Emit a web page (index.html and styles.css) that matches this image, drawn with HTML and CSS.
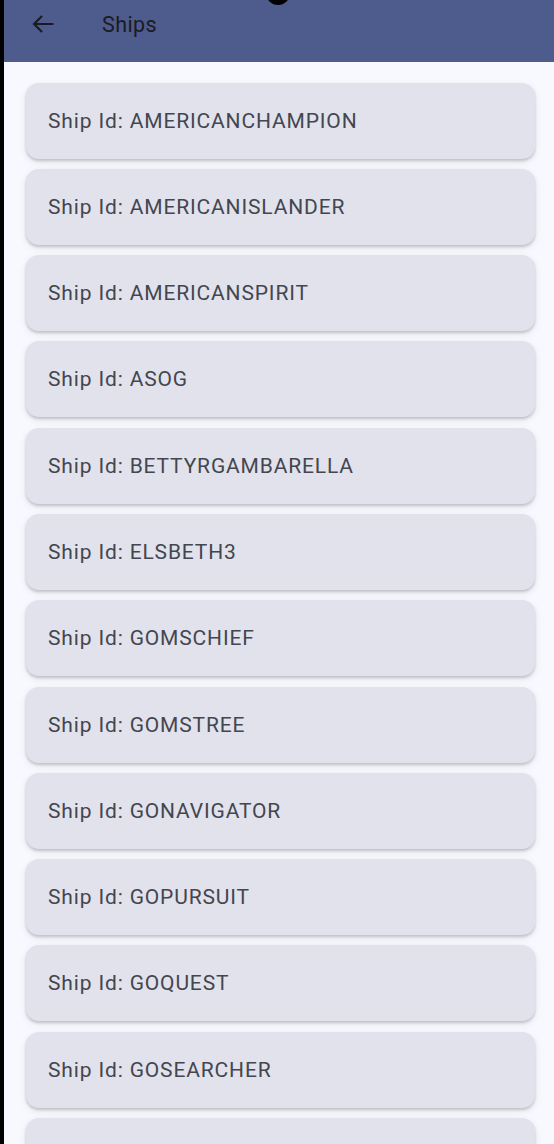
FILE: index.html
```html
<!DOCTYPE html>
<html>
<head>
<meta charset="utf-8">
<link rel="stylesheet" href="styles.css">
</head>
<body>
<div class="edge"></div>
<div class="screen">
  <header class="appbar">
    <div class="cutout"></div>
    <svg class="back" width="24" height="24" viewBox="0 0 24 24"><path d="M22.5 12H3M11 4 3 12l8 8" fill="none" stroke="#1b1b21" stroke-width="2.1"/></svg>
    <span class="title">Ships</span>
  </header>
  <main class="list">
    <div class="card">Ship Id: AMERICANCHAMPION</div>
    <div class="card">Ship Id: AMERICANISLANDER</div>
    <div class="card">Ship Id: AMERICANSPIRIT</div>
    <div class="card">Ship Id: ASOG</div>
    <div class="card">Ship Id: BETTYRGAMBARELLA</div>
    <div class="card">Ship Id: ELSBETH3</div>
    <div class="card">Ship Id: GOMSCHIEF</div>
    <div class="card">Ship Id: GOMSTREE</div>
    <div class="card">Ship Id: GONAVIGATOR</div>
    <div class="card">Ship Id: GOPURSUIT</div>
    <div class="card">Ship Id: GOQUEST</div>
    <div class="card">Ship Id: GOSEARCHER</div>
    <div class="card card-last"></div>
  </main>
</div>
</body>
</html>
```
FILE: styles.css
```css
html, body {
  margin: 0;
  padding: 0;
  height: 100%;
  overflow: hidden;
}
body {
  display: flex;
  background: #f8f9ff;
  font-family: Roboto, "Noto Sans", sans-serif;
}
.edge {
  width: 4px;
  flex: none;
  background: #000;
}
.screen {
  flex: 1;
  display: flex;
  flex-direction: column;
  min-width: 0;
}
.appbar {
  position: relative;
  height: 62px;
  flex: none;
  background: #4d5b8d;
  display: flex;
  align-items: center;
  padding: 0 0 14px 27px;
  box-sizing: border-box;
}
.cutout {
  position: absolute;
  left: 262px;
  top: -19px;
  width: 24px;
  height: 24px;
  border-radius: 50%;
  background: #000;
}
.back {
  flex: none;
}
.title {
  margin-left: 47px;
  font-size: 21.5px;
  color: #1b1b21;
  letter-spacing: 0.4px;
}
.list {
  display: flex;
  flex-direction: column;
  gap: 10.3px;
  padding: 20.5px 19px 0 22px;
}
.card {
  flex: none;
  height: 76px;
  box-sizing: border-box;
  display: flex;
  align-items: center;
  padding: 0 0 0 22px;
  background: #e1e2ec;
  border-radius: 13px;
  box-shadow: 0 2px 3px rgba(0,0,0,0.18), 0 3px 8px rgba(0,0,0,0.08);
  color: #44464f;
  font-size: 21px;
  letter-spacing: 0.85px;
}
```
